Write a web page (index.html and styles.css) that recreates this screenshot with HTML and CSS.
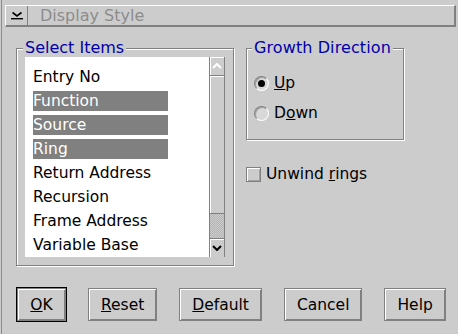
FILE: index.html
```html
<!DOCTYPE html>
<html lang="en">
<head>
    <meta charset="UTF-8">
    <title>Display Style</title>
    <link rel="stylesheet" href="styles.css">
</head>
<body>
    <div class="dialog">
        <div class="titlebar">
            <div class="sysmenu">
                <svg width="12" height="10" viewBox="0 0 12 10">
                    <path d="M1.5 1.5l4.5 3.5 4.5-3.5" stroke="#000" stroke-width="1.6" fill="none"/>
                    <rect x="0" y="7" width="12" height="1.4" fill="#000"/>
                </svg>
            </div>
            <div class="title">Display Style</div>
        </div>

        <div class="content">
            <fieldset class="group items">
                <legend>Select Items</legend>
                <div class="listbox">
                    <ul class="list">
                        <li>Entry No</li>
                        <li class="selected">Function</li>
                        <li class="selected">Source</li>
                        <li class="selected">Ring</li>
                        <li>Return Address</li>
                        <li>Recursion</li>
                        <li>Frame Address</li>
                        <li>Variable Base</li>
                    </ul>
                    <div class="scrollbar">
                        <div class="sb-btn sb-up">
                            <svg width="10" height="6" viewBox="0 0 10 6">
                                <path d="M1 5l4-4 4 4" stroke="#fff" stroke-width="2" fill="none"/>
                            </svg>
                        </div>
                        <div class="sb-thumb"></div>
                        <div class="sb-track"></div>
                        <div class="sb-btn sb-down">
                            <svg width="10" height="6" viewBox="0 0 10 6">
                                <path d="M1 1l4 4 4-4" stroke="#000" stroke-width="2" fill="none"/>
                            </svg>
                        </div>
                    </div>
                </div>
            </fieldset>

            <div class="side">
                <fieldset class="group growth">
                    <legend>Growth Direction</legend>
                    <div class="radio-row">
                        <span class="radio checked"></span>
                        <span><u>U</u>p</span>
                    </div>
                    <div class="radio-row">
                        <span class="radio"></span>
                        <span>D<u>o</u>wn</span>
                    </div>
                </fieldset>
                <div class="check-row">
                    <span class="checkbox"></span>
                    <span>Unwind <u>r</u>ings</span>
                </div>
            </div>
        </div>

        <div class="buttons">
            <button class="btn btn-default"><u>O</u>K</button>
            <button class="btn"><u>R</u>eset</button>
            <button class="btn"><u>D</u>efault</button>
            <button class="btn">Cancel</button>
            <button class="btn">Help</button>
        </div>
    </div>
</body>
</html>
```

FILE: styles.css
```css
/* General Reset */
* {
    margin: 0;
    padding: 0;
    box-sizing: border-box;
}

body {
    background: #cccccc;
    color: #000;
    font-family: "DejaVu Sans", sans-serif;
    font-size: 15.5px;
    width: 458px;
    height: 334px;
    overflow: hidden;
}

.dialog {
    height: 334px;
    margin-left: 1px;
    border-left: 1px solid #8c8c8c;
    padding: 5px 2px 0 3px;
    display: flex;
    flex-direction: column;
}

/* Title bar */
.titlebar {
    display: flex;
    height: 22px;
    border-top: 1px solid #fff;
    border-left: 1px solid #fff;
    border-right: 2px solid #808080;
    border-bottom: 2px solid #808080;
}

.sysmenu {
    width: 22px;
    border-right: 1px solid #808080;
    display: flex;
    align-items: center;
    justify-content: center;
}

.title {
    padding-left: 12px;
    color: #8c8c8c;
    font-size: 16px;
    line-height: 19px;
}

/* Group boxes */
.content {
    display: flex;
    align-items: flex-start;
    margin: 12px 0 0 11px;
}

.group {
    border: 1px solid #808080;
    box-shadow: inset 1px 1px 0 #fff, 1px 1px 0 #fff;
    margin: 0;
}

.group legend {
    margin-left: -2px;
    padding: 0 2px;
    background: #cccccc;
    color: #0000aa;
    font-size: 16px;
    line-height: 18px;
    white-space: nowrap;
}

.items {
    width: 218px;
    padding: 0 8px 8px 8px;
}

/* List box */
.listbox {
    display: flex;
    height: 200px;
}

.list {
    list-style: none;
    width: 184px;
    background: #fff;
    padding: 10px 0 0 8px;
    display: flex;
    flex-direction: column;
    gap: 4px;
    overflow: hidden;
}

.list li {
    width: 135px;
    height: 20px;
    line-height: 20px;
    white-space: nowrap;
}

.list li.selected {
    background: #808080;
    color: #fff;
}

.scrollbar {
    width: 16px;
    border-left: 1px solid #808080;
    border-right: 1px solid #808080;
    display: flex;
    flex-direction: column;
}

.sb-btn {
    height: 19px;
    display: flex;
    align-items: center;
    justify-content: center;
    box-shadow: inset 1px 1px 0 #fff;
}

.sb-up {
    border-bottom: 1px solid #808080;
}

.sb-down {
    border-top: 1px solid #808080;
}

.sb-thumb {
    flex: 1;
    box-shadow: inset 1px 1px 0 #fff;
    border-bottom: 1px solid #808080;
}

.sb-track {
    height: 24px;
    background: repeating-conic-gradient(#b4b4b4 0 25%, #cccccc 0 50%) 0 0 / 2px 2px;
}

/* Right side */
.side {
    margin-left: 12px;
}

.growth {
    width: 158px;
    padding: 11px 6px 11px 7px;
}

.growth legend {
    letter-spacing: 0.1px;
}

.radio-row {
    height: 30px;
    display: flex;
    align-items: center;
    gap: 5px;
}

.radio {
    position: relative;
    width: 15px;
    height: 15px;
    border-radius: 50%;
    border: 1px solid;
    border-color: #808080 #fff #fff #808080;
    background: #d8d8d8;
    box-shadow: inset 1px 1px 0 #a0a0a0;
}

.radio.checked::after {
    content: "";
    position: absolute;
    left: 3px;
    top: 3px;
    width: 7px;
    height: 7px;
    border-radius: 50%;
    background: #000;
}

.check-row {
    margin-top: 24px;
    height: 20px;
    display: flex;
    align-items: center;
    gap: 5px;
}

.checkbox {
    width: 15px;
    height: 15px;
    border: 1px solid #808080;
    box-shadow: inset 1px 1px 0 #fff, inset -1px -1px 0 #a0a0a0;
}

/* Buttons */
.buttons {
    display: flex;
    gap: 22px;
    margin: 22px 0 0 12px;
}

.btn {
    height: 33px;
    min-width: 49px;
    padding: 0 12px;
    background: #cccccc;
    border: 1px solid #808080;
    box-shadow: inset 1px 1px 0 #fff, inset -1px -1px 0 #808080;
    font-family: "DejaVu Sans", sans-serif;
    font-size: 15.5px;
    color: #000;
}

.btn-default {
    outline: 1px solid #000;
}
```
